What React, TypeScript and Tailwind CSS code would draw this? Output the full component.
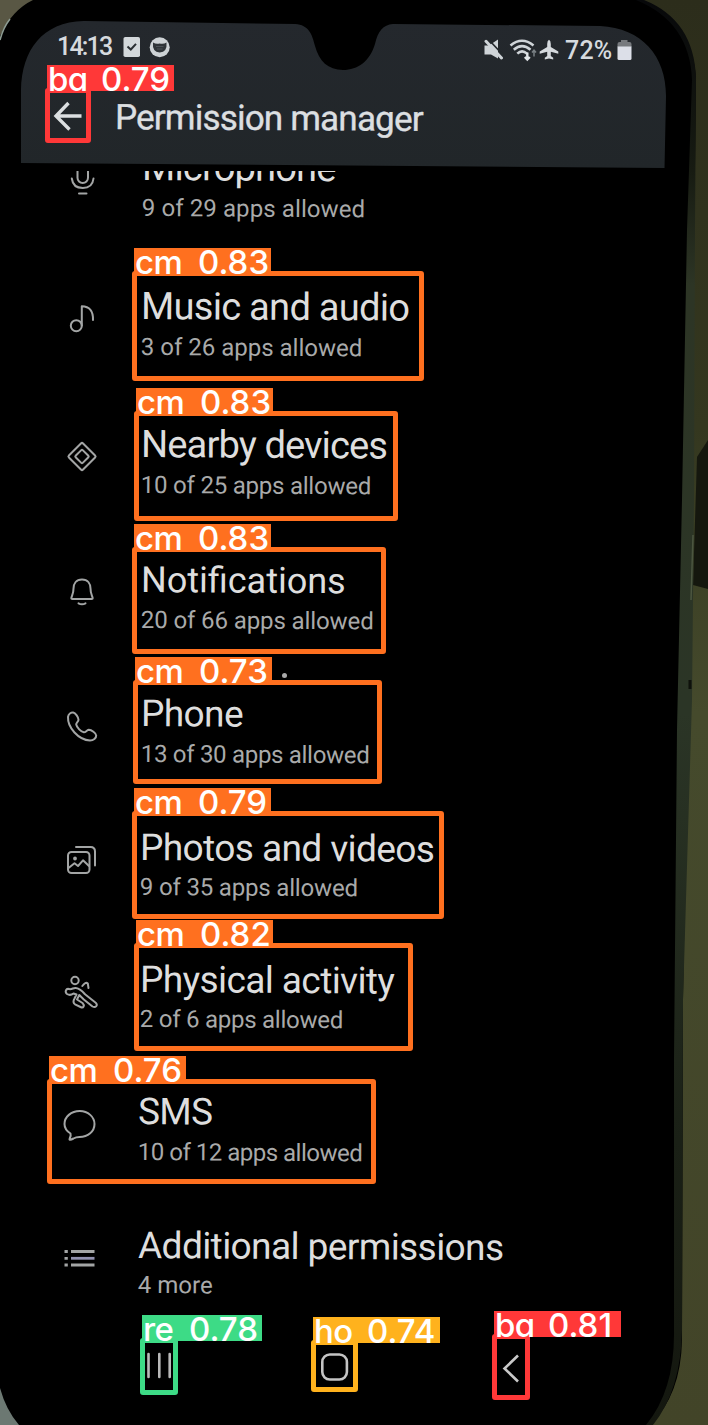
import type { ReactNode } from "react";

function Backdrop() {
  return (
    <svg className="absolute inset-0" width="708" height="1425" viewBox="0 0 708 1425" aria-hidden="true">
      <defs>
        <linearGradient id="wall" x1="0" y1="0" x2="0" y2="1">
          <stop offset="0" stopColor="#2c2d1b" />
          <stop offset="0.3" stopColor="#34371f" />
          <stop offset="0.5" stopColor="#454a2c" />
          <stop offset="1" stopColor="#424428" />
        </linearGradient>
        <linearGradient id="rim" x1="0" y1="0" x2="0" y2="1">
          <stop offset="0" stopColor="#07080a" />
          <stop offset="0.12" stopColor="#171b12" />
          <stop offset="0.2" stopColor="#2d3525" />
          <stop offset="0.5" stopColor="#2b3526" />
          <stop offset="0.8" stopColor="#1a2016" />
          <stop offset="1" stopColor="#14170f" />
        </linearGradient>
        <linearGradient id="bar" x1="0" y1="0" x2="0" y2="1">
          <stop offset="0" stopColor="#24282d" />
          <stop offset="1" stopColor="#212629" />
        </linearGradient>
      </defs>
      <rect width="708" height="1425" fill="#000" />
      <path d="M640 0H708V1425H650Q681 1395 682 1340L683 1000L690 600L696 80Q694 25 640 0Z" fill="url(#wall)" />
      <path d="M708 440L697 457L693 585L708 589Z" fill="#15170e" />
      <path d="M636 0H644Q694 20 696 78L695 230L694 500L692 700L683 1000L682 1330Q681 1390 653 1425H646Q675 1390 674 1330L674 1060L677 730L682 500L687 230L692 80Q690 22 636 0Z" fill="url(#rim)" />
      <path d="M693 535L691 600M690 680V688" stroke="#4c5640" strokeWidth="1.5" fill="none" />
      <path d="M690 680V689" stroke="#0e110b" strokeWidth="3" />
      <path d="M0 0H33Q12 10 0 36Z" fill="#595744" />
      <path d="M0 40Q3 28 10 19" stroke="#8d9c93" strokeWidth="1.5" fill="none" />
      <path d="M0 1388Q6 1410 19 1425H0Z" fill="#6c7872" />
      <path
        d="M21 163V90C22 50 42 22 84 21L295 24C309 25 312 34 315 46C319 61 328 70 343 70C358 70 370 61 375 44C378 31 383 25 393 24L600 26C642 28 666 56 666 96L664.500 168Z"
        fill="url(#bar)"
      />
      <circle cx="284.500" cy="675.500" r="2.500" fill="#a9a9a9" />
    </svg>
  );
}

function StatusBar() {
  return (
    <div className="flex h-[31px] items-start justify-between pr-[76px] pl-[57px] text-[25px] leading-[25px] font-medium text-[#d6dade]">
      <div className="flex items-start">
        <span className="w-[66px] tracking-[-1.8px]">14:13</span>
        <svg width="18" height="22" viewBox="0 0 18 22" className="mt-[2px]">
          <rect x="0.500" y="1" width="16.500" height="20" rx="1.800" fill="#d3d8db" />
          <path d="M4.500 10.500L7.800 13.500L13 7.800" fill="none" stroke="#2a2f33" strokeWidth="2" />
        </svg>
        <svg width="22" height="22" viewBox="0 0 22 22" className="mt-[2px] ml-[8px]">
          <circle cx="10.700" cy="11.200" r="10" fill="#cdd2d5" />
          <path d="M4 6.500Q7 8.500 10.700 7.500Q14.500 8.500 17.500 6.500Q18.500 16 10.700 16.500Q3 16 4 6.500Z" fill="#2f3438" />
          <path d="M7 10.500H14.500M8 13H13.500" stroke="#4c5257" strokeWidth="1.200" />
        </svg>
      </div>
      <div className="mt-[4px] flex items-start">
        <svg width="20" height="22" viewBox="0 0 20 22" className="mt-[1px] -ml-[3px]">
          <path d="M0.500 6.500H5L14 0.500V19.500L7 15.500H0.500Z" fill="#cfd4d8" />
          <path d="M4.500 0.500L19.500 16.500" stroke="#23282c" strokeWidth="1.600" />
          <path d="M2 2.300L17.500 19" stroke="#cfd4d8" strokeWidth="3" strokeLinecap="round" />
        </svg>
        <svg width="30" height="24" viewBox="0 0 30 24" className="ml-[5px]">
          <g fill="none" stroke="#cfd4d8" strokeWidth="2.600">
            <path d="M1.500 7.500Q13 -2 24.500 7.500" />
            <path d="M4.800 11.800Q13 4.500 21.500 11.800" />
            <path d="M8.300 15.600Q13 11 18 15.600" />
          </g>
          <path d="M18.300 14.500V22M15.800 19L18.300 21.500L20.800 19" fill="none" stroke="#e2e6e9" strokeWidth="2.400" />
          <path d="M25 18.500V12.500M23 14.500L25 12.200L27 14.500" fill="none" stroke="#7a8084" strokeWidth="1.500" />
        </svg>
        <svg width="20" height="22" viewBox="0 0 20 22" className="mt-[1px]">
          <path d="M10 0.800Q11.800 1.500 11.800 5V8L19.300 12.500V14.800L11.800 12.800V17L14.200 18.800V20.500L10 19.500L5.800 20.500V18.800L8.200 17V12.800L0.700 14.800V12.500L8.200 8V5Q8.200 1.500 10 0.800Z" fill="#d6dade" />
        </svg>
        <span className="ml-[6px] w-[52px] tracking-[0.2px]">72%</span>
        <svg width="15" height="22" viewBox="0 0 15 22" className="mt-[1px]">
          <path d="M4 1H10.500V3H12.500Q14.500 3 14.500 5V8H0.500V5Q0.500 3 2.500 3H4Z" fill="#777a7e" />
          <path d="M0.500 7.500H14.500V19.500Q14.500 21 13 21H2Q0.500 21 0.500 19.500Z" fill="#dcdfe8" />
        </svg>
      </div>
    </div>
  );
}

function Icon({ children }: { children: ReactNode }) {
  return (
    <svg
      className="mt-[15px] shrink-0"
      width="36"
      height="36"
      viewBox="0 0 36 36"
      fill="none"
      stroke="#a3a5a5"
      strokeWidth="2"
      strokeLinecap="round"
      strokeLinejoin="round"
    >
      {children}
    </svg>
  );
}

const icons = {
  mic: (
    <Icon>
      <rect x="12.500" y="0" width="10.500" height="21" rx="5.250" />
      <path d="M6.800 16.500Q8 26 17.800 26Q27.500 26 28.500 16.500M14 31.500H21.500" />
    </Icon>
  ),
  music: (
    <Icon>
      <circle cx="12.300" cy="24.700" r="5.500" />
      <path d="M17.800 24.500V5.200Q29.500 5.500 29 19" />
    </Icon>
  ),
  nearby: (
    <Icon>
      <rect x="8" y="7.500" width="20" height="20" rx="1.500" transform="rotate(45 18 17.5)" />
      <rect x="13" y="12.500" width="10" height="10" rx="1" transform="rotate(45 18 17.5)" />
    </Icon>
  ),
  bell: (
    <Icon>
      <path d="M18 5.500C12 5.500 9.500 10 9.500 14.500C9.500 20.500 7.500 22 7.300 24.300Q7.300 25 8.300 25H27.700Q28.700 25 28.700 24.300C28.500 22 26.500 20.500 26.500 14.500C26.500 10 24 5.500 18 5.500Z" />
      <path d="M14.500 29.300Q18 31.300 21.500 29.300" />
    </Icon>
  ),
  phone: (
    <Icon>
      <path d="M4 9C4.500 6 7 4.300 9.200 4.500C11.500 4.800 14.500 9.300 14.500 11.800C14.500 13.800 12 14.500 12.200 16.500C12.800 19.500 17 23.800 19.800 24.300C21.800 24.500 22.600 22 24.800 21.800C27.500 21.800 32 25 32.200 27.500C32.300 30 29.500 32.500 26 32.500C14.500 32 3.500 19.500 4 9Z" />
    </Icon>
  ),
  photos: (
    <Icon>
      <rect x="5" y="10" width="21.500" height="21" rx="3.500" />
      <path d="M13 5H27.500Q32 5 32 9.500V23.500M5.500 26L11.500 21.300L15 24L20 18.300L26 24" />
      <circle cx="12" cy="16.500" r="0.900" fill="#a3a5a5" />
    </Icon>
  ),
  activity: (
    <Icon>
      <circle cx="12" cy="6.500" r="3.700" />
      <path d="M19.300 12Q22.500 7.500 24.800 9.500L25.500 14" />
      <path d="M4 20C1.500 18 3 14.200 6 15C9 15.800 10.500 13.300 13 14C17.500 14.800 19 16.800 22 20.300L32.700 28.700C35.500 31.200 32.500 34.200 29.500 32.500L20.800 25.500L16.300 21L14 25.500L19.500 29C22 31.500 20.500 34.500 17.500 33L12 30.300C10 28.800 10 27 11.500 24.500L13.500 20.500L10.500 19.500C8.500 21 6.500 21.500 4 20Z" />
    </Icon>
  ),
  sms: (
    <Icon>
      <path d="M9.500 27.500C5.500 25 3.500 21.500 3.500 18C3.500 11 10 5 18.800 5C27 5 33.500 11 33.500 18C33.500 25.500 27 31 18.500 31C16.500 31 14.500 31.300 12.500 32.500C11.200 33.200 9.500 34 8.500 33.500C8 33 10.500 30.500 9.500 27.500Z" />
    </Icon>
  ),
  list: (
    <Icon>
      <g strokeWidth="2.800" strokeLinecap="butt">
        <path d="M3.500 11.500H6.800M3.500 18.300H6.800M3.500 25H6.800" />
        <path d="M10 11.500H33.500M10 25H33.500" />
        <path d="M10 18.300H33.500" stroke="#9292b0" />
      </g>
    </Icon>
  ),
};

const rows = [
  { icon: icons.mic, title: "Microphone", note: "9 of 29 apps allowed", box: "h-[139px] pl-[64.5px]", t: "text-[38px] tracking-[-0.8px] -translate-y-px", s: "tracking-[0.1px]" },
  { icon: icons.music, title: "Music and audio", note: "3 of 26 apps allowed", box: "h-[138px] pl-[64px]", t: "text-[38px] tracking-[-0.7px] -translate-y-px", s: "" },
  { icon: icons.nearby, title: "Nearby devices", note: "10 of 25 apps allowed", box: "h-[135px] pl-[64px]", t: "text-[38px] tracking-[-0.85px] -translate-y-px", s: "tracking-[-0.22px]" },
  { icon: icons.bell, title: "Notifications", note: "20 of 66 apps allowed", box: "h-[134px] pl-[64px]", t: "text-[36px]", s: "tracking-[-0.1px]" },
  { icon: icons.phone, title: "Phone", note: "13 of 30 apps allowed", box: "h-[134px] pl-[63.5px]", t: "text-[37px] tracking-[-0.6px]", s: "tracking-[-0.3px]" },
  { icon: icons.photos, title: "Photos and videos", note: "9 of 35 apps allowed", box: "h-[132px] pl-[63px]", t: "text-[37px] tracking-[-0.58px]", s: "tracking-[-0.17px] -translate-y-px" },
  { icon: icons.activity, title: "Physical activity", note: "2 of 6 apps allowed", box: "h-[132px] pl-[62.5px]", t: "text-[37px] tracking-[-0.58px]", s: "tracking-[-0.25px] -translate-y-px" },
  { icon: icons.sms, title: "SMS", note: "10 of 12 apps allowed", box: "h-[134px] pl-[61px]", t: "text-[37px] tracking-[-0.7px]", s: "tracking-[-0.5px]" },
  { icon: icons.list, title: "Additional permissions", note: "4 more", box: "h-[115px] pl-[60.5px]", t: "text-[37px] tracking-[-0.57px]", s: "-translate-y-px" },
];

const detections = [
  { name: "ba", score: "0.79", box: "left-[45px] top-[88px] w-[46px] h-[55px] border-[#ff3838]", tag: "w-[127px] bg-[#ff3838]" },
  { name: "cm", score: "0.83", box: "left-[132px] top-[271px] w-[292px] h-[110px] border-[#ff701f]", tag: "w-[137px] bg-[#ff701f]" },
  { name: "cm", score: "0.83", box: "left-[134px] top-[411px] w-[264px] h-[110px] border-[#ff701f]", tag: "w-[137px] bg-[#ff701f]" },
  { name: "cm", score: "0.83", box: "left-[132px] top-[547px] w-[254px] h-[107px] border-[#ff701f]", tag: "w-[137px] bg-[#ff701f]" },
  { name: "cm", score: "0.73", box: "left-[133px] top-[680px] w-[249px] h-[104px] border-[#ff701f]", tag: "w-[137px] bg-[#ff701f]" },
  { name: "cm", score: "0.79", box: "left-[132px] top-[811px] w-[312px] h-[108px] border-[#ff701f]", tag: "w-[137px] bg-[#ff701f]" },
  { name: "cm", score: "0.82", box: "left-[134px] top-[943px] w-[279px] h-[108px] border-[#ff701f]", tag: "w-[137px] bg-[#ff701f]" },
  { name: "cm", score: "0.76", box: "left-[47px] top-[1079px] w-[329px] h-[105px] border-[#ff701f]", tag: "w-[137px] bg-[#ff701f]" },
  { name: "re", score: "0.78", box: "left-[140px] top-[1338px] w-[38px] h-[57px] border-[#3ddb86]", tag: "w-[120px] bg-[#3ddb86]" },
  { name: "ho", score: "0.74", box: "left-[311px] top-[1340px] w-[47px] h-[52px] border-[#ffb21d]", tag: "w-[127px] bg-[#ffb21d]" },
  { name: "ba", score: "0.81", box: "left-[492px] top-[1334px] w-[38px] h-[66px] border-[#ff3838]", tag: "w-[127px] bg-[#ff3838]" },
];

export default function App() {
  return (
    <main className="relative h-[1425px] w-[708px] overflow-hidden bg-black font-['Roboto',sans-serif]">
      <Backdrop />
      <div className="relative flex flex-col">
        <header className="h-[168px] pt-[34px]">
          <StatusBar />
          <div className="mt-[31px] flex items-start gap-[30px] pl-[52px]">
            <svg className="mt-[4px]" width="32" height="32" viewBox="0 0 32 32" fill="none" stroke="#dcdfe1" strokeWidth="3.400">
              <path d="M16.500 3L4 16L17.500 29.500M4 16H29.500" />
            </svg>
            <h1 className="origin-left rotate-[0.35deg] pl-px text-[35px] leading-[44px] font-normal tracking-[-0.8px] whitespace-nowrap text-[#dcdfe1] [-webkit-text-stroke:0.4px_#dcdfe1]">
              Permission manager
            </h1>
          </div>
        </header>

        <div className="mt-[3px] h-[1169px] overflow-hidden">
          <ul className="-mt-[24px] flex flex-col">
            {rows.map((row) => (
              <li key={row.title} className={`flex items-start gap-[41px] ${row.box}`}>
                {row.icon}
                <div className="mt-px origin-left rotate-[0.35deg] whitespace-nowrap">
                  <h2 className={`leading-[40px] font-normal text-[#dedede] ${row.t}`}>{row.title}</h2>
                  <p className={`mt-[6px] text-[24px] leading-[28px] text-[#a9aaaa] ${row.s}`}>{row.note}</p>
                </div>
              </li>
            ))}
          </ul>
        </div>

        <nav className="flex h-[40px] items-start pt-[8px] pl-[145px]">
          <svg width="28" height="36" viewBox="0 0 28 36" stroke="#b9b9b9" strokeWidth="2.600" strokeLinecap="round">
            <path d="M3.500 6V29M14.300 6V29M24.700 6V29" />
          </svg>
          <svg className="ml-[146px]" width="32" height="36" viewBox="0 0 32 36" fill="none" stroke="#c4c4c4" strokeWidth="2.600">
            <rect x="3.300" y="6.500" width="24.600" height="25" rx="7.500" />
          </svg>
          <svg className="ml-[149px]" width="22" height="38" viewBox="0 0 22 38" fill="none" stroke="#c9c9c9" strokeWidth="2.600">
            <path d="M18 7.500L4.500 20.500L18 33.500" />
          </svg>
        </nav>
      </div>

      {detections.map((d, i) => (
        <div key={i} className={`absolute rounded-[3px] border-[5px] ${d.box}`}>
          <div
            className={`absolute -top-[28px] -left-[3px] flex h-[26px] justify-between pr-[1px] pl-[1px] font-['Inter',sans-serif] text-[33px] leading-[28px] font-medium text-white [font-feature-settings:'cv11'] ${d.tag}`}
          >
            <span className="tracking-[-0.6px]">{d.name}</span>
            <span className="w-[72px]">{d.score}</span>
          </div>
        </div>
      ))}
    </main>
  );
}
